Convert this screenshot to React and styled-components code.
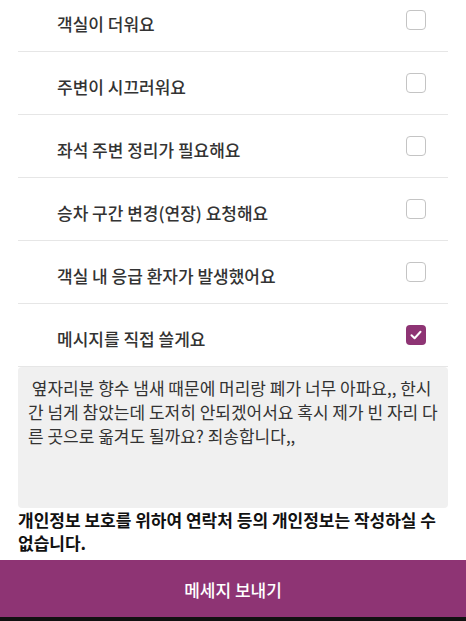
import React, { useState } from "react";
import styled, { createGlobalStyle } from "styled-components";

const GlobalStyle = createGlobalStyle`
  html, body {
    margin: 0;
    padding: 0;
    background: #fff;
    overflow: hidden;
  }
  body {
    font-family: "Noto Sans CJK KR", "Noto Sans", sans-serif;
    color: #333;
  }
`;

const Page = styled.div`
  width: 466px;
  height: 621px;
  display: flex;
  flex-direction: column;
  overflow: hidden;
  background: #fff;
`;

const Body = styled.div`
  flex: 1;
  overflow: hidden;
  padding: 0 18px;
`;

const List = styled.ul`
  list-style: none;
  margin: -11px 0 0;
  padding: 0;
`;

const Row = styled.li`
  height: 63px;
  display: flex;
  align-items: center;
  justify-content: space-between;
  padding: 0 22px 0 39px;
  border-bottom: 1px solid #e6e6e6;
  box-sizing: border-box;
  cursor: pointer;
`;

const Label = styled.span`
  font-size: 17px;
  font-weight: 500;
  color: #333;
  padding-top: 6px;
`;

const Box = styled.span`
  width: 20px;
  height: 20px;
  box-sizing: border-box;
  border-radius: 4px;
  border: ${(p) => (p.$checked ? "none" : "1.5px solid #c4c4c4")};
  background: ${(p) => (p.$checked ? "#8e3474" : "#fff")};
  display: flex;
  align-items: center;
  justify-content: center;
`;

const Message = styled.div`
  background: #f0f0f0;
  border-radius: 4px;
  height: 141px;
  box-sizing: border-box;
  padding: 9px 10px 7px;
  font-size: 17px;
  line-height: 24px;
  color: #333;
  white-space: pre-wrap;
`;

const Notice = styled.p`
  margin: 0;
  font-size: 17px;
  line-height: 23px;
  font-weight: 700;
  color: #111;
`;

const SendButton = styled.button`
  height: 57px;
  width: 100%;
  border: none;
  background: #8e3474;
  color: #fff;
  font-family: "Noto Sans CJK KR", "Noto Sans", sans-serif;
  font-size: 17px;
  font-weight: 500;
  padding-top: 2px;
  flex-shrink: 0;
`;

const NavEdge = styled.div`
  height: 4px;
  background: #111;
  flex-shrink: 0;
`;

const options = [
  "객실이 더워요",
  "주변이 시끄러워요",
  "좌석 주변 정리가 필요해요",
  "승차 구간 변경(연장) 요청해요",
  "객실 내 응급 환자가 발생했어요",
  "메시지를 직접 쓸게요",
];

function Check({ checked }) {
  return (
    <Box $checked={checked}>
      {checked && (
        <svg width="14" height="14" viewBox="0 0 14 14">
          <path
            d="M2.5 7.2 L5.6 10.2 L11.5 3.8"
            fill="none"
            stroke="#fff"
            strokeWidth="2"
            strokeLinecap="round"
            strokeLinejoin="round"
          />
        </svg>
      )}
    </Box>
  );
}

export default function App() {
  const [selected, setSelected] = useState(5);
  return (
    <Page>
      <GlobalStyle />
      <Body>
        <List>
          {options.map((label, i) => (
            <Row key={label} onClick={() => setSelected(i)}>
              <Label>{label}</Label>
              <Check checked={selected === i} />
            </Row>
          ))}
        </List>
        <Message>
          {" 옆자리분 향수 냄새 때문에 머리랑 폐가 너무 아파요,, 한시간 넘게 참았는데 도저히 안되겠어서요 혹시 제가 빈 자리 다른 곳으로 옮겨도 될까요? 죄송합니다,,"}
        </Message>
        <Notice>개인정보 보호를 위하여 연락처 등의 개인정보는 작성하실 수 없습니다.</Notice>
      </Body>
      <SendButton>메세지 보내기</SendButton>
      <NavEdge />
    </Page>
  );
}
